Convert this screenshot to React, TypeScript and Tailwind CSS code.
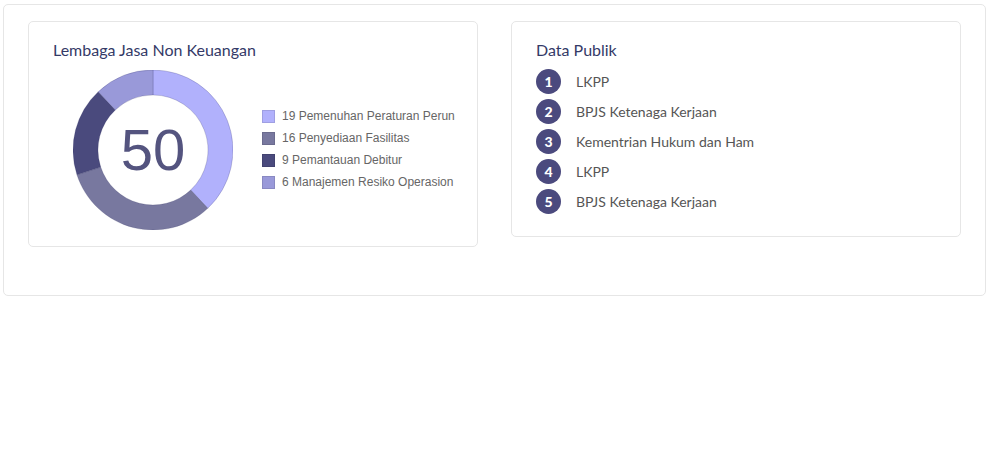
const segments = [
  { value: 19, label: "19 Pemenuhan Peraturan Perun", color: "#b1b1fc" },
  { value: 16, label: "16 Penyediaan Fasilitas", color: "#78789f" },
  { value: 9, label: "9 Pemantauan Debitur", color: "#4a4a7d" },
  { value: 6, label: "6 Manajemen Resiko Operasion", color: "#9999d9" },
];

const publik = ["LKPP", "BPJS Ketenaga Kerjaan", "Kementrian Hukum dan Ham", "LKPP", "BPJS Ketenaga Kerjaan"];

function arc(start: number, end: number) {
  const c = 80, R = 80, r = 55;
  const p = (a: number, rad: number) => {
    const t = (a - 90) * (Math.PI / 180);
    return `${(c + rad * Math.cos(t)).toFixed(2)} ${(c + rad * Math.sin(t)).toFixed(2)}`;
  };
  const large = end - start > 180 ? 1 : 0;
  return `M ${p(start, R)} A ${R} ${R} 0 ${large} 1 ${p(end, R)} L ${p(end, r)} A ${r} ${r} 0 ${large} 0 ${p(start, r)} Z`;
}

function Donut() {
  const total = segments.reduce((s, x) => s + x.value, 0);
  let angle = 0;
  return (
    <div className="relative w-[160px] h-[160px] shrink-0">
      <svg width="160" height="160" viewBox="0 0 160 160">
        {segments.map((s, i) => {
          const start = angle;
          angle += (s.value / total) * 360;
          return <path key={i} d={arc(start, angle)} fill={s.color} stroke="rgba(40,40,90,0.25)" strokeWidth="0.8" />;
        })}
      </svg>
      <div className="absolute inset-0 flex items-center justify-center text-[58px] leading-none text-[#54547f] font-['Liberation_Sans',Arial,sans-serif]">
        {total}
      </div>
    </div>
  );
}

function App() {
  return (
    <div className="bg-white w-[1000px] h-[460px] pt-[4px] pl-[3px] font-['Lato',sans-serif]">
      <div className="w-[983px] border border-[#e6e6e6] rounded-[5px] pt-[16px] pb-[48px] px-[24px] flex items-start gap-[33px]">
        <div className="w-[450px] border border-[#e6e6e6] rounded-[5px] pl-[24px] pt-[17px] pb-[16px]">
          <h3 className="text-[16px] leading-[22px] text-[#343a67]">Lembaga Jasa Non Keuangan</h3>
          <div className="flex items-center mt-[9px] pl-[20px]">
            <Donut />
            <div className="ml-[29px] -mt-[2px] flex flex-col gap-[6px] font-['Liberation_Sans',Arial,sans-serif] text-[12px] text-[#666] leading-[16px]">
              {segments.map((s, i) => (
                <div key={i} className="flex items-center gap-[7px] whitespace-nowrap">
                  <span className="w-[13px] h-[13px] border border-black/10" style={{ backgroundColor: s.color }} />
                  <span>{s.label}</span>
                </div>
              ))}
            </div>
          </div>
        </div>
        <div className="w-[450px] border border-[#e6e6e6] rounded-[5px] pl-[24px] pt-[17px] pb-[22px]">
          <h3 className="text-[16px] leading-[22px] text-[#343a67]">Data Publik</h3>
          <ul className="mt-[8px] flex flex-col gap-[5px]">
            {publik.map((t, i) => (
              <li key={i} className="flex items-center h-[25px]">
                <span className="w-[25px] h-[25px] rounded-full bg-[#4b4a7e] text-white text-[14px] font-black flex items-center justify-center">
                  {i + 1}
                </span>
                <span className="ml-[15px] text-[14px] text-[#555]">{t}</span>
              </li>
            ))}
          </ul>
        </div>
      </div>
    </div>
  );
}

export default App;
